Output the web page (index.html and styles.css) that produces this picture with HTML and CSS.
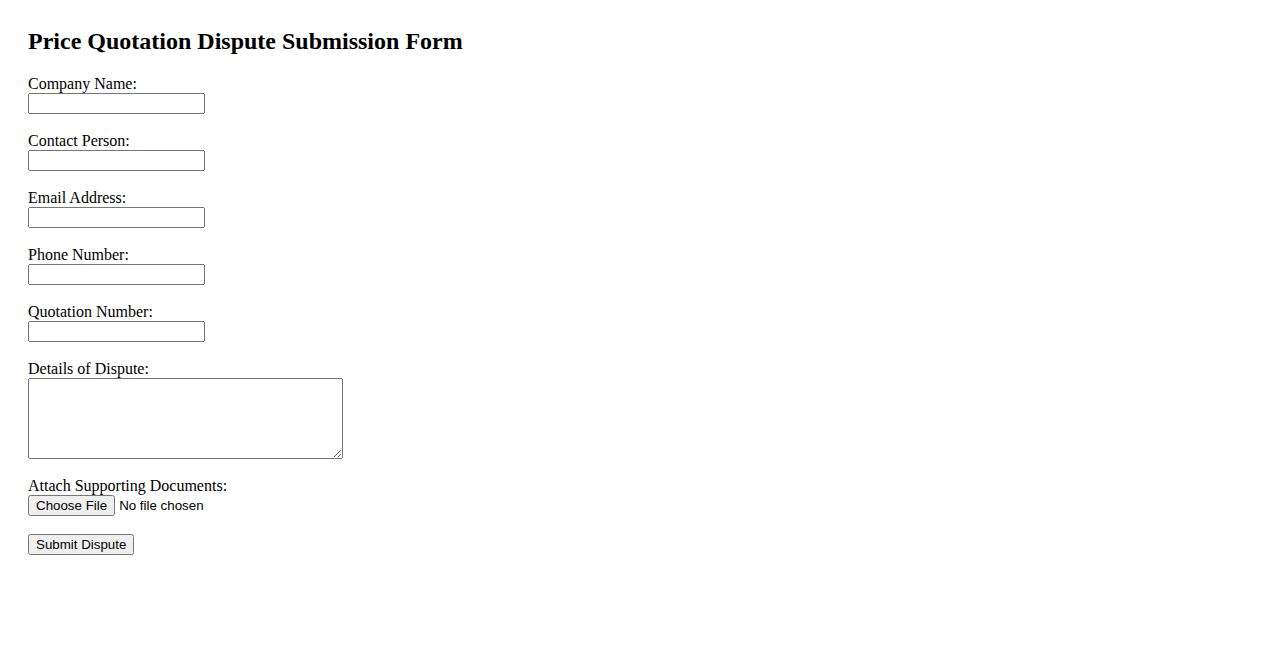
FILE: index.html
```html
<!DOCTYPE html>
<html>
<head>
<meta charset="utf-8">
<title>Price Quotation Dispute Submission Form</title>
<link rel="stylesheet" href="styles.css">
</head>
<body>
<h2 class="title">Price Quotation Dispute Submission Form</h2>
<form class="form">
<label for="company">Company Name:</label><br>
<input type="text" id="company" class="field"><br><br>
<label for="contact">Contact Person:</label><br>
<input type="text" id="contact" class="field"><br><br>
<label for="email">Email Address:</label><br>
<input type="email" id="email" class="field"><br><br>
<label for="phone">Phone Number:</label><br>
<input type="tel" id="phone" class="field"><br><br>
<label for="quote">Quotation Number:</label><br>
<input type="text" id="quote" class="field"><br><br>
<label for="details">Details of Dispute:</label><br>
<textarea id="details" class="details"></textarea><br><br>
<label for="docs">Attach Supporting Documents:</label><br>
<input type="file" id="docs" class="file"><br><br>
<input type="submit" value="Submit Dispute" class="submit">
</form>
</body>
</html>
```
FILE: styles.css
```css
body {
  margin: 8px;
  padding: 20px;
  font-family: "Liberation Serif", "Times New Roman", serif;
  font-size: 16px;
  color: #000;
  background: #fff;
}
.title {
  font-size: 24px;
  font-weight: bold;
  margin: 0 0 20px 0;
}
.field {
  width: 177px;
  height: 21px;
  box-sizing: border-box;
  font-family: "Liberation Sans", Arial, sans-serif;
  font-size: 13.33px;
}
.details {
  width: 315px;
  height: 81px;
  box-sizing: border-box;
  vertical-align: bottom;
}
.file, .submit {
  font-family: "Liberation Sans", Arial, sans-serif;
  font-size: 13.33px;
}
```
